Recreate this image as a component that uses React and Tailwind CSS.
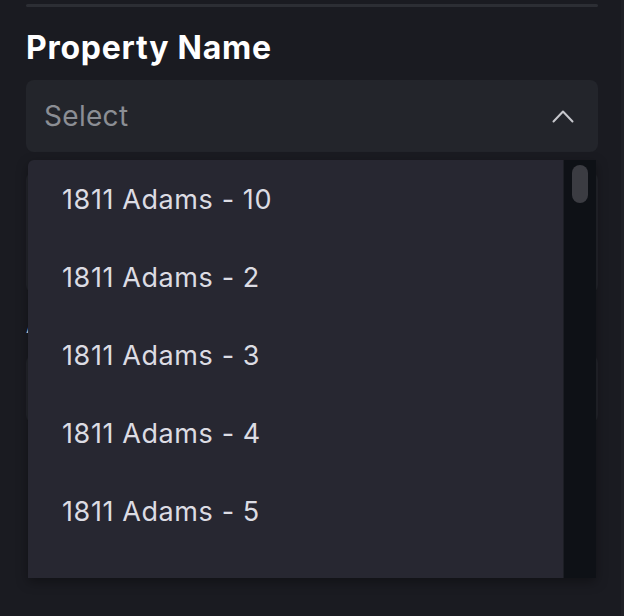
const options = [
  "1811 Adams - 10",
  "1811 Adams - 2",
  "1811 Adams - 3",
  "1811 Adams - 4",
  "1811 Adams - 5",
  "1811 Adams - 6",
];

function ChevronUp() {
  return (
    <svg width="22" height="14" viewBox="0 0 22 14" fill="none">
      <path d="M1.5 12.5 L11 2.5 L20.5 12.5" stroke="#c6c7cc" strokeWidth="2" strokeLinecap="round" strokeLinejoin="round" />
    </svg>
  );
}

export default function App() {
  return (
    <div
      className="relative h-[616px] w-[624px] overflow-hidden bg-[#1a1b21] px-[26px] shadow-[inset_-3px_0_0_#1f2026]"
      style={{ fontFamily: "Inter, 'Noto Sans', sans-serif" }}
    >
      <div className="mt-[4px] h-[3px] rounded-full bg-[#2c2e34]" />

      <h2 className="mt-[25px] h-[32px] text-[32px] font-bold leading-none tracking-[0.75px] text-white">
        Property Name
      </h2>

      <button className="mt-[16px] flex h-[72px] w-full items-center justify-between rounded-[8px] bg-[#23252b] pl-[18px] pr-[24px]">
        <span className="text-[28px] leading-none tracking-[0.3px] text-[#8b8e94]">Select</span>
        <ChevronUp />
      </button>

      <div className="relative pt-[20px]">
        {/* content under the open menu */}
        <div className="h-[121px] rounded-[8px] bg-[#23252b]" />
        <div className="mt-[18px] text-[20px] font-semibold text-[#d9d9de]">Address</div>
        <div className="mt-[14px] h-[68px] rounded-[8px] bg-[#23252b]" />

        <div className="absolute left-[2px] right-[2px] top-[8px] flex h-[418px] overflow-hidden rounded-tl-[6px] bg-[#272731] shadow-[0_4px_12px_rgba(0,0,0,0.35)]">
          <ul className="flex-1">
            {options.map((o) => (
              <li
                key={o}
                className="flex h-[78px] items-center pl-[34px] text-[27px] leading-none tracking-[0.6px] text-[#dcdce3]"
              >
                {o}
              </li>
            ))}
          </ul>
          <div className="w-[33px] border-l border-[#1c1e24] bg-[#0e1116] pl-[8px] pt-[5px]">
            <div className="h-[38px] w-[16px] rounded-full bg-[#3b3c42]" />
          </div>
        </div>
      </div>
    </div>
  );
}
